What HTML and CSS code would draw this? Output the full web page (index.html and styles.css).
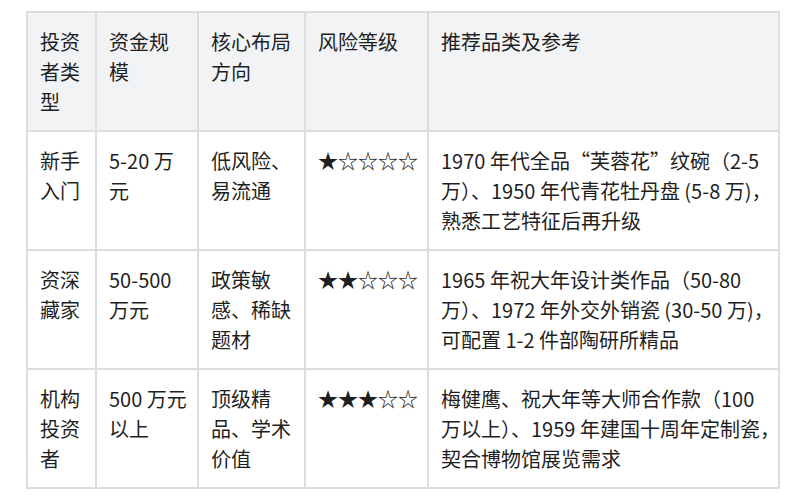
FILE: index.html
```html
<!DOCTYPE html>
<html lang="zh-CN">
<head>
<meta charset="utf-8">
<title>投资者类型</title>
<link rel="stylesheet" href="styles.css">
</head>
<body>
<div class="wrap">
<table class="grid">
  <colgroup>
    <col class="c1"><col class="c2"><col class="c3"><col class="c4"><col class="c5">
  </colgroup>
  <thead>
    <tr>
      <th>投资者类型</th>
      <th>资金规模</th>
      <th>核心布局方向</th>
      <th>风险等级</th>
      <th>推荐品类及参考</th>
    </tr>
  </thead>
  <tbody>
    <tr>
      <td>新手入门</td>
      <td>5-20 万元</td>
      <td>低风险、易流通</td>
      <td class="stars">★☆☆☆☆</td>
      <td class="ref">1970 年代全品“芙蓉花”纹碗（2-5<br>万）、1950 年代青花牡丹盘 (5-8 万)，<br>熟悉工艺特征后再升级</td>
    </tr>
    <tr>
      <td>资深藏家</td>
      <td>50-500 万元</td>
      <td>政策敏感、稀缺题材</td>
      <td class="stars">★★☆☆☆</td>
      <td class="ref">1965 年祝大年设计类作品（50-80<br>万）、1972 年外交外销瓷 (30-50 万)，<br>可配置 1-2 件部陶研所精品</td>
    </tr>
    <tr>
      <td>机构投资者</td>
      <td class="ref">500 万元<br>以上</td>
      <td>顶级精品、学术价值</td>
      <td class="stars">★★★☆☆</td>
      <td class="ref">梅健鹰、祝大年等大师合作款（100<br>万以上）、1959 年建国十周年定制瓷，<br>契合博物馆展览需求</td>
    </tr>
  </tbody>
</table>
</div>
</body>
</html>
```
FILE: styles.css
```css
html, body {
  margin: 0;
  padding: 0;
  background: #ffffff;
}
.wrap {
  padding: 11px 16px 0 26px;
}
.grid {
  border-collapse: collapse;
  table-layout: fixed;
  width: 752px;
  font-family: "Noto Sans CJK SC", "DejaVu Sans", sans-serif;
  font-size: 20px;
  line-height: 30px;
  color: #1f1f1f;
}
.c1 { width: 69px; }
.c2 { width: 102px; }
.c3 { width: 107px; }
.c4 { width: 123px; }
.c5 { width: 351px; }
.grid th,
.grid td {
  border: 2px solid #dcdde1;
  padding: 14px 12px 13px 12px;
  text-align: left;
  vertical-align: top;
  font-weight: normal;
  height: 90px;
}
.grid th {
  background: #f2f3f5;
}
.ref {
  white-space: nowrap;
}
.stars {
  letter-spacing: 0;
}
```
